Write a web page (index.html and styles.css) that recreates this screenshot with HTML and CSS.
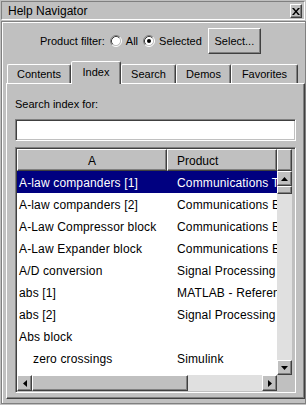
FILE: index.html
```
<!DOCTYPE html>
<html lang="en">
<head>
  <meta charset="UTF-8">
  <meta name="viewport" content="width=device-width, initial-scale=1">
  <title>Help Navigator</title>
  <link rel="stylesheet" href="styles.css">
</head>
<body>
  <div class="win">
    <div class="titlebar">
      <span class="title">Help Navigator</span>
      <span class="close">
        <svg width="8" height="7" viewBox="0 0 8 7"><path d="M0 0h2l2 2.5L6 0h2L5 3.5 8 7H6L4 4.5 2 7H0l3-3.5z" fill="#000"/></svg>
      </span>
    </div>

    <div class="main">
      <div class="filter">
        <span>Product filter:</span>
        <span class="radio">
          <svg width="12" height="12" viewBox="0 0 12 12">
            <circle cx="6" cy="6" r="4.5" fill="#fff"/>
            <path d="M2.11 9.89A5.5 5.5 0 0 1 9.89 2.11" fill="none" stroke="#808080"/>
            <path d="M9.89 2.11A5.5 5.5 0 0 1 2.11 9.89" fill="none" stroke="#fff"/>
            <path d="M2.82 9.18A4.5 4.5 0 0 1 9.18 2.82" fill="none" stroke="#404040"/>
            <path d="M9.18 2.82A4.5 4.5 0 0 1 2.82 9.18" fill="none" stroke="#c0c0c0"/>
          </svg>
        </span>
        <span class="opt">All</span>
        <span class="radio">
          <svg width="12" height="12" viewBox="0 0 12 12">
            <circle cx="6" cy="6" r="4.5" fill="#fff"/>
            <path d="M2.11 9.89A5.5 5.5 0 0 1 9.89 2.11" fill="none" stroke="#808080"/>
            <path d="M9.89 2.11A5.5 5.5 0 0 1 2.11 9.89" fill="none" stroke="#fff"/>
            <path d="M2.82 9.18A4.5 4.5 0 0 1 9.18 2.82" fill="none" stroke="#404040"/>
            <path d="M9.18 2.82A4.5 4.5 0 0 1 2.82 9.18" fill="none" stroke="#c0c0c0"/>
            <circle cx="6" cy="6" r="2" fill="#000"/>
          </svg>
        </span>
        <span class="opt">Selected</span>
        <span class="btn">Select...</span>
      </div>

      <div class="tabs">
        <div class="tab t-contents">Contents</div>
        <div class="tab t-index on">Index</div>
        <div class="tab t-search">Search</div>
        <div class="tab t-demos">Demos</div>
        <div class="tab t-fav">Favorites</div>
      </div>

      <div class="panel">
        <div class="lbl">Search index for:</div>
        <div class="field"></div>

        <div class="grid">
          <div class="head">
            <div class="hcell col-a">A</div>
            <div class="hcell col-p">Product</div>
            <div class="hcell col-c"></div>
          </div>

          <div class="content">
            <div class="rows">
              <div class="row sel"><span class="a">A-law companders [1]</span><span class="p">Communications Toolbox</span></div>
              <div class="row"><span class="a">A-law companders [2]</span><span class="p">Communications Blockset</span></div>
              <div class="row"><span class="a">A-Law Compressor block</span><span class="p">Communications Blockset</span></div>
              <div class="row"><span class="a">A-Law Expander block</span><span class="p">Communications Blockset</span></div>
              <div class="row"><span class="a">A/D conversion</span><span class="p">Signal Processing Toolbox</span></div>
              <div class="row"><span class="a">abs [1]</span><span class="p">MATLAB - Reference</span></div>
              <div class="row"><span class="a">abs [2]</span><span class="p">Signal Processing Toolbox</span></div>
              <div class="row"><span class="a">Abs block</span><span class="p"></span></div>
              <div class="row"><span class="a sub">zero crossings</span><span class="p">Simulink</span></div>
            </div>
            <div class="vscroll">
              <div class="sbtn vbtn"><svg width="7" height="4" viewBox="0 0 7 4"><path d="M3.5 0L7 4H0z" fill="#000"/></svg></div>
              <div class="vthumb"></div>
              <div class="track"></div>
              <div class="sbtn vbtn"><svg width="7" height="4" viewBox="0 0 7 4"><path d="M0 0h7L3.5 4z" fill="#000"/></svg></div>
            </div>
          </div>

          <div class="hbar">
            <div class="hscroll">
              <div class="sbtn hbtn"><svg width="4" height="7" viewBox="0 0 4 7"><path d="M4 0v7L0 3.5z" fill="#000"/></svg></div>
              <div class="hthumb"></div>
              <div class="track"></div>
              <div class="sbtn hbtn"><svg width="4" height="7" viewBox="0 0 4 7"><path d="M0 0l4 3.5L0 7z" fill="#000"/></svg></div>
            </div>
            <div class="corner"></div>
          </div>
        </div>
      </div>
    </div>
  </div>
</body>
</html>
```

FILE: styles.css
```
* {
  box-sizing: border-box;
}
body {
  margin: 0;
  background: #c0c0c0;
  font-family: "Liberation Sans", Arial, sans-serif;
  font-size: 12px;
  color: #000;
}
.win {
  width: 306px;
  height: 405px;
  display: flex;
  flex-direction: column;
}

/* title bar */
.titlebar {
  margin: 1px 1px 0;
  height: 19px;
  border: 1px solid;
  border-color: #808080 #fff #fff #808080;
  padding: 1px 2px 0 6px;
  display: flex;
  align-items: center;
  justify-content: space-between;
}
.close {
  width: 12px;
  height: 14px;
  border: 1px solid;
  border-color: #fff #404040 #404040 #fff;
  box-shadow: inset -1px -1px #808080;
  display: flex;
  align-items: center;
  justify-content: center;
}

/* main area */
.main {
  flex: 1;
  margin: 1px 0 1px 1px;
  border: 1px solid #808080;
  box-shadow: inset 1px 1px #fff;
  padding: 6px 0 4px 4px;
  display: flex;
  flex-direction: column;
}
.filter {
  height: 26px;
  padding-left: 34px;
  display: flex;
  align-items: center;
  font-size: 11px;
}
.radio {
  display: flex;
  margin-left: 5px;
}
.opt {
  margin-left: 4px;
}
.btn {
  margin-left: 6px;
  width: 53px;
  height: 26px;
  border: 1px solid;
  border-color: #fff #404040 #404040 #fff;
  box-shadow: inset -1px -1px #808080;
  display: flex;
  align-items: center;
  justify-content: center;
}

/* tabs */
.tabs {
  height: 22px;
  margin-top: 7px;
  margin-left: 1px;
  display: flex;
  align-items: flex-end;
  position: relative;
  z-index: 1;
}
.tab {
  height: 19px;
  border: 1px solid;
  border-bottom: 0;
  border-color: #fff #404040 transparent #fff;
  border-radius: 2px 2px 0 0;
  box-shadow: inset -1px 0 #808080;
  font-size: 11px;
  line-height: 18px;
  text-align: center;
}
.tab.on {
  height: 23px;
  margin-bottom: -1px;
  background: #c0c0c0;
  line-height: 21px;
}
.t-contents { width: 64px; }
.t-index { width: 50px; }
.t-search { width: 55px; }
.t-demos { width: 55px; }
.t-fav { width: 67px; }

.panel {
  flex: 1;
  border: 1px solid;
  border-color: #fff #404040 #404040 #fff;
  box-shadow: inset -1px -1px #808080;
  padding: 14px 8px 5px 8px;
  display: flex;
  flex-direction: column;
}
.lbl {
  font-size: 11px;
  line-height: 13px;
}
.field {
  margin-top: 8px;
  height: 22px;
  background: #fff;
  border: 1px solid;
  border-color: #808080 #fff #fff #808080;
  box-shadow: inset 1px 1px #404040, inset -1px -1px #c0c0c0;
}

/* index table */
.grid {
  flex: 1;
  margin-top: 6px;
  border: 1px solid;
  border-color: #808080 #fff #fff #808080;
  box-shadow: inset 1px 1px #404040, inset -1px -1px #c0c0c0;
  padding: 1px;
  display: flex;
  flex-direction: column;
}
.head {
  display: flex;
  height: 22px;
}
.hcell {
  border: 1px solid;
  border-color: #fff #404040 #404040 #fff;
  box-shadow: inset -1px -1px #808080;
  line-height: 22px;
  white-space: nowrap;
}
.col-a {
  width: 150px;
  text-align: center;
}
.col-p {
  width: 110px;
  padding-left: 9px;
}
.col-c {
  width: 15px;
}
.content {
  flex: 1;
  display: flex;
}
.rows {
  width: 260px;
  background: #fff;
  overflow: hidden;
}
.row {
  display: flex;
  height: 22px;
  padding-top: 2px;
  line-height: 20px;
  white-space: nowrap;
  letter-spacing: 0.15px;
}
.row.sel {
  background: #000080;
  color: #fff;
}
.a {
  flex: none;
  width: 150px;
  padding-left: 2px;
}
.a.sub {
  padding-left: 16px;
}
.p {
  padding-left: 10px;
}

/* scrollbars */
.vscroll {
  width: 15px;
  display: flex;
  flex-direction: column;
}
.sbtn {
  flex: none;
  background: #c0c0c0;
  border: 1px solid;
  border-color: #fff #404040 #404040 #fff;
  box-shadow: inset -1px -1px #808080;
  display: flex;
  align-items: center;
  justify-content: center;
}
.vbtn {
  height: 15px;
}
.hbtn {
  width: 15px;
}
.vthumb {
  height: 8px;
  border: 1px solid;
  border-color: #fff #404040 #404040 #fff;
  box-shadow: inset -1px -1px #808080;
}
.track {
  flex: 1;
  background: #e0e0e0;
}
.hbar {
  display: flex;
  height: 16px;
}
.hscroll {
  width: 260px;
  display: flex;
}
.hthumb {
  width: 156px;
  border: 1px solid;
  border-color: #fff #404040 #404040 #fff;
  box-shadow: inset -1px -1px #808080;
}
.corner {
  width: 15px;
}
```
